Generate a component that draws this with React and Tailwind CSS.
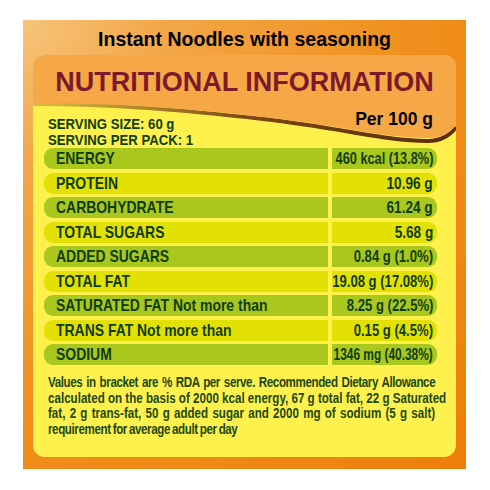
import React from "react";

const rows = [
  ["ENERGY", "460 kcal (13.8%)", true, "scale-x-[0.75]"],
  ["PROTEIN", "10.96 g", false, "scale-x-[0.8]"],
  ["CARBOHYDRATE", "61.24 g", true, "scale-x-[0.8]"],
  ["TOTAL SUGARS", "5.68 g", false, "scale-x-[0.8]"],
  ["ADDED SUGARS", "0.84 g (1.0%)", true, "scale-x-[0.77]"],
  ["TOTAL FAT", "19.08 g (17.08%)", false, "scale-x-[0.77]"],
  ["SATURATED FAT Not more than", "8.25 g (22.5%)", true, "scale-x-[0.77]"],
  ["TRANS FAT Not more than", "0.15 g (4.5%)", false, "scale-x-[0.77]"],
  ["SODIUM", "1346 mg (40.38%)", true, "scale-x-[0.7]"],
];

const sans = "font-['Liberation_Sans',Arial,sans-serif]";

export default function App() {
  return (
    <div className={`w-[490px] h-[490px] bg-white overflow-hidden pt-[20px] pl-[23px] ${sans}`}>
      <div className="w-[443px] h-[449px] flex flex-col px-[10px] pb-[12px] bg-[radial-gradient(circle_at_0%_0%,#f6c47a_0%,#f3a748_22%,#f0901e_60%,#ee7d0a_100%)]">
        <div className="h-[35px] flex items-center justify-center pt-[3px] text-[21px] font-bold text-black whitespace-nowrap">
          <span className="inline-block scale-x-[0.93]">Instant Noodles with seasoning</span>
        </div>
        <div className="relative flex-1 rounded-[12px] overflow-hidden bg-[#fef14e]">
          <svg className="absolute left-0 top-0" width="423" height="110" viewBox="0 0 423 110">
            <defs>
              <linearGradient id="brown" x1="0" y1="0" x2="1" y2="0">
                <stop offset="0" stopColor="#8a4a14" stopOpacity="0.3" />
                <stop offset="0.5" stopColor="#6e3610" stopOpacity="0.9" />
                <stop offset="1" stopColor="#5a2a0c" stopOpacity="1" />
              </linearGradient>
            </defs>
            <path
              d="M0,49 C80,49 150,55 230,64 S350,86 395,86 C410,86 418,79 423,72"
              fill="none"
              stroke="url(#brown)"
              strokeWidth="4"
            />
            <path
              d="M0,48 C80,48 150,53 230,62 S350,83 395,83 C410,83 418,77 423,70 L423,0 L0,0 Z"
              fill="#f6a847"
            />
          </svg>
          <div className="relative flex flex-col">
            <div className="pt-[11px] h-[43px] leading-[32px] text-center text-[27px] font-bold text-[#7c1a2c]">
              NUTRITIONAL INFORMATION
            </div>
            <div className="flex justify-between h-[50px] pt-[11px]">
              <div className="pl-[15px] pt-[7px] text-[15.5px] leading-[16px] font-bold text-[#0f3d12] whitespace-nowrap">
                <div className="origin-left scale-x-[0.85]">SERVING SIZE: 60 g</div>
                <div className="origin-left scale-x-[0.85]">SERVING PER PACK: 1</div>
              </div>
              <div className="pr-[23px] text-[17.5px] leading-[20px] font-bold text-black">
                Per 100 g
              </div>
            </div>
            <div className="flex flex-col gap-[3.5px] pl-[11px]">
              {rows.map(([label, value, dark, sc]) => (
                <div key={label} className="flex gap-[4px] h-[21px] text-[17px] leading-[21px] font-bold text-[#0f3d12] whitespace-nowrap">
                  <div className={`w-[284px] shrink-0 rounded-l-[9px] pl-[12px] ${dark ? "bg-[#a9c71c]" : "bg-[#e3e004]"}`}>
                    <span className="inline-block origin-left scale-x-[0.82]">{label}</span>
                  </div>
                  <div className={`w-[105px] shrink-0 flex justify-end rounded-r-[9px] pr-[4px] ${dark ? "bg-[#a9c71c]" : "bg-[#e3e004]"}`}>
                    <span className={`inline-block shrink-0 origin-right ${sc}`}>{value}</span>
                  </div>
                </div>
              ))}
            </div>
            <div className="mt-[10px] ml-[15px] w-[387px] h-[62px] text-[14.5px] leading-[15.5px] font-bold text-[#1d4812] whitespace-nowrap">
              <div className="w-[484px] origin-top-left scale-x-[0.8]">
                <div className="text-justify [text-align-last:justify] tracking-[-0.5px] [word-spacing:-1px]">Values in bracket are % RDA per serve. Recommended Dietary Allowance</div>
                <div className="text-justify [text-align-last:justify]">calculated on the basis of 2000 kcal energy, 67 g total fat, 22 g Saturated</div>
                <div className="text-justify [text-align-last:justify]">fat, 2 g trans-fat, 50 g added sugar and 2000 mg of sodium (5 g salt)</div>
                <div className="tracking-[-0.5px] [word-spacing:-1px]">requirement for average adult per day</div>
              </div>
            </div>
          </div>
        </div>
      </div>
    </div>
  );
}
